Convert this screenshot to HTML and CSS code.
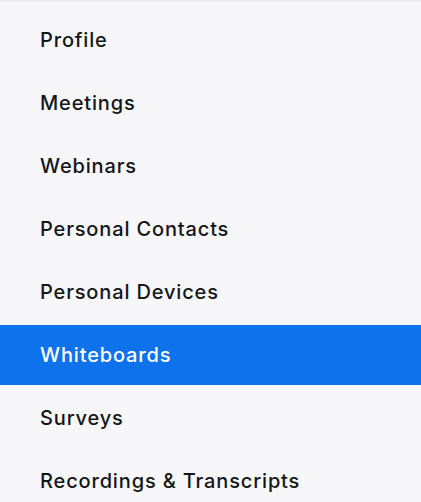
FILE: index.html
```html
<!DOCTYPE html>
<html>
<head>
<meta charset="utf-8">
<link rel="stylesheet" href="styles.css">
</head>
<body>
<nav class="menu">
  <a class="item">Profile</a>
  <a class="item">Meetings</a>
  <a class="item">Webinars</a>
  <a class="item">Personal Contacts</a>
  <a class="item">Personal Devices</a>
  <a class="item active">Whiteboards</a>
  <a class="item">Surveys</a>
  <a class="item">Recordings &amp; Transcripts</a>
</nav>
</body>
</html>
```
FILE: styles.css
```css
html, body {
  margin: 0;
  padding: 0;
  background: #f7f7f9;
}
.menu {
  border-top: 2px solid #eeeef1;
  padding-top: 8px;
  display: flex;
  flex-direction: column;
  gap: 3px;
  font-family: Inter, "Noto Sans", sans-serif;
}
.item {
  display: flex;
  align-items: center;
  height: 60px;
  padding-left: 40px;
  font-size: 20px;
  font-weight: 500;
  color: #131619;
  letter-spacing: 0.85px;
}
.item.active {
  background: #0e72ed;
  color: #ffffff;
}
```
